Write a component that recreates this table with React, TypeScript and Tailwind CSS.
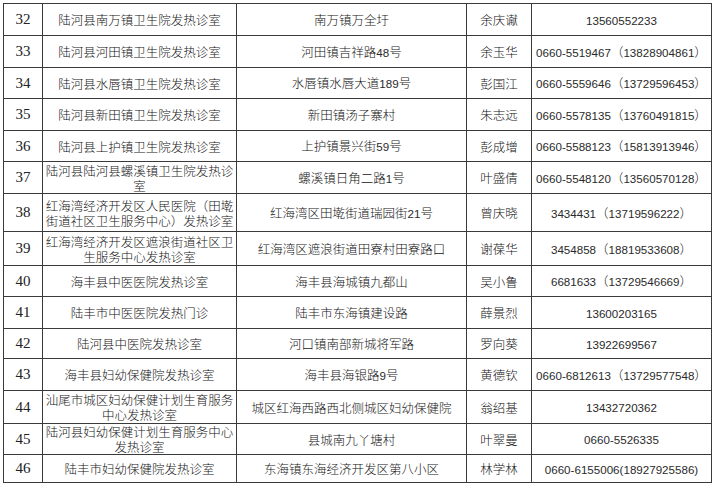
// Fever clinic list table (rows 32-46)
const rows = [
  { no: "32", name: "陆河县南万镇卫生院发热诊室", addr: "南万镇万全圩", person: "余庆谳", phone: "13560552233", h: 32 },
  { no: "33", name: "陆河县河田镇卫生院发热诊室", addr: "河田镇吉祥路48号", person: "余玉华", phone: "0660-5519467（13828904861）", h: 32 },
  { no: "34", name: "陆河县水唇镇卫生院发热诊室", addr: "水唇镇水唇大道189号", person: "彭国江", phone: "0660-5559646（13729596453）", h: 31 },
  { no: "35", name: "陆河县新田镇卫生院发热诊室", addr: "新田镇汤子寨村", person: "朱志远", phone: "0660-5578135（13760491815）", h: 32 },
  { no: "36", name: "陆河县上护镇卫生院发热诊室", addr: "上护镇景兴街59号", person: "彭成增", phone: "0660-5588123（15813913946）", h: 31 },
  { no: "37", name: "陆河县陆河县螺溪镇卫生院发热诊室", addr: "螺溪镇日角二路1号", person: "叶盛倩", phone: "0660-5548120（13560570128）", h: 32 },
  { no: "38", name: "红海湾经济开发区人民医院（田墘街道社区卫生服务中心）发热诊室", addr: "红海湾区田墘街道瑞园街21号", person: "曾庆晓", phone: "3434431（13719596222）", h: 38 },
  { no: "39", name: "红海湾经济开发区遮浪街道社区卫生服务中心发热诊室", addr: "红海湾区遮浪街道田寮村田寮路口", person: "谢葆华", phone: "3454858（18819533608）", h: 34 },
  { no: "40", name: "海丰县中医医院发热诊室", addr: "海丰县海城镇九都山", person: "吴小鲁", phone: "6681633（13729546669）", h: 31 },
  { no: "41", name: "陆丰市中医医院发热门诊", addr: "陆丰市东海镇建设路", person: "薛景烈", phone: "13600203165", h: 32 },
  { no: "42", name: "陆河县中医院发热诊室", addr: "河口镇南部新城将军路", person: "罗向葵", phone: "13922699567", h: 30 },
  { no: "43", name: "海丰县妇幼保健院发热诊室", addr: "海丰县海银路9号", person: "黄德钦", phone: "0660-6812613（13729577548）", h: 32 },
  { no: "44", name: "汕尾市城区妇幼保健计划生育服务中心发热诊室", addr: "城区红海西路西北侧城区妇幼保健院", person: "翁绍基", phone: "13432720362", h: 33 },
  { no: "45", name: "陆河县妇幼保健计划生育服务中心发热诊室", addr: "县城南九丫塘村", person: "叶翠曼", phone: "0660-5526335", h: 30 },
  { no: "46", name: "陆丰市妇幼保健院发热诊室", addr: "东海镇东海经济开发区第八小区", person: "林学林", phone: "0660-6155006(18927925586)", h: 28 },
];

// ascii runs get a narrow latin face, the rest stays CJK
function Txt({ text }: { text: string }) {
  const parts = text.split(/([\x20-\x7e]+)/);
  return (
    <>
      {parts.map((p, i) =>
        i % 2 === 1 ? (
          <span key={i} className="font-['Liberation_Sans',sans-serif] text-[11.6px] text-[#2a2a2a]">
            {p}
          </span>
        ) : (
          <span key={i}>{p}</span>
        )
      )}
    </>
  );
}

const cell = "border border-[#3a3a3a] p-0 text-center align-middle";

export default function App() {
  return (
    <div className="w-[714px] h-[486px] bg-white pl-[3px] pt-[3px]">
      <table className="table-fixed border-collapse w-[708px] text-[12.5px] leading-[15px] text-[#151515] font-['Noto_Sans_CJK_SC',sans-serif] font-light">
        <colgroup>
          <col className="w-[39px]" />
          <col className="w-[194px]" />
          <col className="w-[230px]" />
          <col className="w-[65px]" />
          <col className="w-[180px]" />
        </colgroup>
        <tbody>
          {rows.map((r) => (
            <tr key={r.no} style={{ height: r.h }}>
              <td className={`${cell} font-['Liberation_Serif',serif] font-normal text-[15px] text-[#222]`}>{r.no}</td>
              <td className={`${cell} px-[1px]`}>
                <Txt text={r.name} />
              </td>
              <td className={cell}>
                <Txt text={r.addr} />
              </td>
              <td className={cell}>{r.person}</td>
              <td className={`${cell} whitespace-nowrap`}>
                <Txt text={r.phone} />
              </td>
            </tr>
          ))}
        </tbody>
      </table>
    </div>
  );
}
